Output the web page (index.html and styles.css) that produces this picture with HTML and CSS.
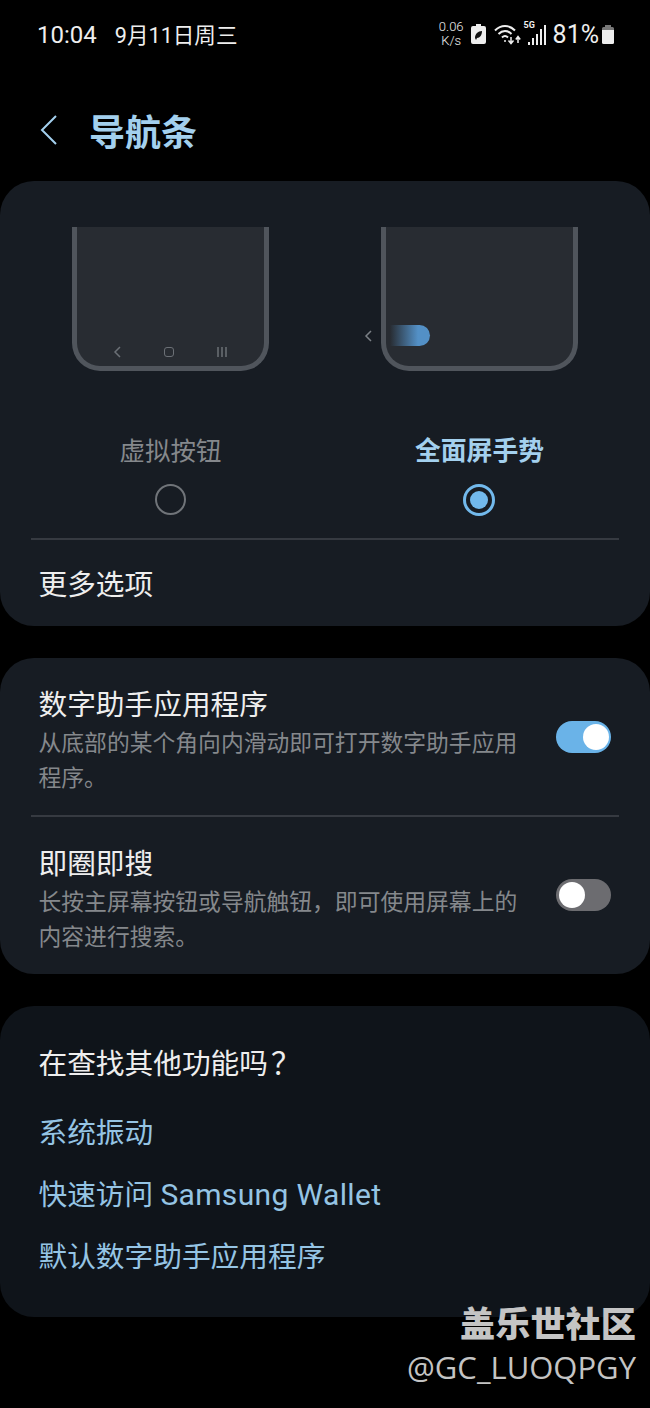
FILE: index.html
```html
<!DOCTYPE html>
<html lang="zh-CN">
<head>
    <meta charset="UTF-8">
    <meta name="viewport" content="width=device-width, initial-scale=1.0">
    <title>导航条</title>
    <link rel="stylesheet" href="styles.css">
</head>
<body>
    <div class="screen">
        <div class="status-bar">
            <div class="status-left">
                <span class="time">10:04</span>
                <span class="date">9月11日周三</span>
            </div>
            <div class="status-right">
                <div class="net-speed">0.06<br>K/s</div>
                <svg class="icon-saver" width="15" height="20" viewBox="0 0 15 20">
                    <path d="M5 0h5v2h3a2 2 0 0 1 2 2v14a2 2 0 0 1-2 2H2a2 2 0 0 1-2-2V4a2 2 0 0 1 2-2h3z" fill="#eee"/>
                    <path d="M4 14c0-4 3-7 7-7 0 4-2 7-5 7l-1 2z" fill="#111"/>
                </svg>
                <svg class="icon-wifi" width="28" height="22" viewBox="0 0 28 22" fill="none" stroke="#eee" stroke-width="2">
                    <path d="M1 7.500c6-6 14-6 20 0"/>
                    <path d="M4.500 11c4-4 9-4 13 0"/>
                    <path d="M8 14.500c2-2 4-2 6 0"/>
                    <path d="M17 14v6M14.500 17.500l2.500 3 2.500-3" stroke-width="1.500"/>
                    <path d="M24 20v-6M21.800 16.500l2.200-3 2.200 3" stroke-width="1.500"/>
                    <circle cx="11" cy="18" r="1" fill="#eee" stroke="none"/>
                </svg>
                <div class="signal">
                    <span class="signal-label">5G</span>
                    <svg width="18" height="24" viewBox="0 0 18 24" fill="#eee">
                        <rect x="0" y="20" width="2" height="3"/>
                        <rect x="4" y="16" width="2" height="7"/>
                        <rect x="8" y="12" width="2" height="11"/>
                        <rect x="12" y="7" width="2" height="16"/>
                        <rect x="16" y="3" width="2" height="20"/>
                    </svg>
                </div>
                <span class="battery-text">81%</span>
                <svg width="12" height="19" viewBox="0 0 12 19">
                    <path d="M3 0h6v2h1.500A1.500 1.500 0 0 1 12 3.500V5H0V3.500A1.500 1.500 0 0 1 1.500 2H3z" fill="#777"/>
                    <path d="M0 5h12v12.500a1.500 1.500 0 0 1-1.500 1.500h-9A1.500 1.500 0 0 1 0 17.500z" fill="#eee"/>
                </svg>
            </div>
        </div>

        <div class="page-header">
            <svg class="back-icon" width="18" height="30" viewBox="0 0 18 30" fill="none" stroke="#a3d0ee" stroke-width="2">
                <path d="M17 1 3 15l14 14"/>
            </svg>
            <h1>导航条</h1>
        </div>

        <div class="card card-nav">
            <div class="nav-options">
                <div class="nav-option">
                    <div class="phone">
                        <div class="phone-buttons">
                            <svg width="8" height="12" viewBox="0 0 8 12" fill="none" stroke="#6b7076" stroke-width="1.500"><path d="M7 1 2 6l5 5"/></svg>
                            <span class="home-btn"></span>
                            <svg width="10" height="10" viewBox="0 0 10 10" stroke="#6b7076" stroke-width="1.500"><path d="M1 0v10M5 0v10M9 0v10"/></svg>
                        </div>
                    </div>
                    <div class="nav-label">虚拟按钮</div>
                    <div class="radio"></div>
                </div>
                <div class="nav-option selected">
                    <div class="phone">
                        <svg class="swipe-arrow" width="8" height="12" viewBox="0 0 8 12" fill="none" stroke="#7b8086" stroke-width="1.500"><path d="M7 1 2 6l5 5"/></svg>
                        <div class="swipe-pill"></div>
                    </div>
                    <div class="nav-label">全面屏手势</div>
                    <div class="radio"><span></span></div>
                </div>
            </div>
            <div class="divider"></div>
            <div class="more-row">更多选项</div>
        </div>

        <div class="card card-settings">
            <div class="setting-row">
                <div class="setting-text">
                    <div class="setting-title">数字助手应用程序</div>
                    <div class="setting-desc">从底部的某个角向内滑动即可打开数字助手应用程序。</div>
                </div>
                <div class="toggle on"><span></span></div>
            </div>
            <div class="divider"></div>
            <div class="setting-row">
                <div class="setting-text">
                    <div class="setting-title">即圈即搜</div>
                    <div class="setting-desc">长按主屏幕按钮或导航触钮，即可使用屏幕上的内容进行搜索。</div>
                </div>
                <div class="toggle"><span></span></div>
            </div>
        </div>

        <div class="card card-links">
            <div class="links-title">在查找其他功能吗<span class="question">？</span></div>
            <a class="link">系统振动</a>
            <a class="link">快速访问 <span class="latin">Samsung Wallet</span></a>
            <a class="link">默认数字助手应用程序</a>
        </div>

        <div class="watermark">
            <div class="watermark-name">盖乐世社区</div>
            <div class="watermark-user">@GC_LUOQPGY</div>
        </div>
    </div>
</body>
</html>
```

FILE: styles.css
```css
* {
    box-sizing: border-box;
}

body {
    margin: 0;
    background: #000;
    font-family: Roboto, "Noto Sans CJK SC", sans-serif;
    color: #eee;
}

.screen {
    position: relative;
    width: 650px;
    height: 1408px;
    overflow: hidden;
    background: #000;
}

/* status bar */
.status-bar {
    display: flex;
    justify-content: space-between;
    align-items: center;
    height: 70px;
    padding: 0 36px 2px 37px;
}

.status-left {
    display: flex;
    align-items: baseline;
    gap: 18px;
    margin-bottom: 2px;
    color: #eee;
}

.time {
    font-size: 24px;
}

.date {
    font-size: 21.600px;
}

.status-right {
    display: flex;
    align-items: center;
    font-size: 25px;
}

.net-speed {
    font-size: 13px;
    font-weight: 300;
    line-height: 14px;
    text-align: center;
    margin-right: 7px;
}

.icon-saver {
    margin-right: 8px;
}

.icon-wifi {
    margin-right: 2px;
}

.signal {
    position: relative;
    width: 22px;
    height: 24px;
    margin-right: 7px;
    display: flex;
    justify-content: flex-end;
}

.signal-label {
    position: absolute;
    left: 0;
    top: -2px;
    font-size: 9px;
    font-weight: 700;
}

.battery-text {
    margin-right: 3px;
}

/* header */
.page-header {
    display: flex;
    align-items: center;
    height: 111px;
    padding-left: 39px;
    padding-top: 8px;
}

.back-icon {
    margin-right: 32px;
}

h1 {
    margin: 0;
    font-size: 36px;
    font-weight: 700;
    color: #a3d0ee;
}

/* cards */
.card {
    background: #171c23;
    border-radius: 34px;
    margin-bottom: 32px;
}

.divider {
    height: 2px;
    margin: 0 31px;
    background: #363a41;
}

.card-nav {
    height: 445px;
}

.nav-options {
    display: flex;
    height: 357px;
    padding: 46px 72px 0;
    justify-content: space-between;
}

.nav-option {
    width: 197px;
    display: flex;
    flex-direction: column;
    align-items: center;
}

.phone {
    position: relative;
    width: 197px;
    height: 144px;
    background: #282c32;
    border: 5px solid #50555c;
    border-top: none;
    border-radius: 0 0 28px 28px;
    display: flex;
    flex-direction: column;
    justify-content: flex-end;
}

.phone-buttons {
    display: flex;
    justify-content: space-between;
    align-items: center;
    padding: 0 37px 8px 36px;
}

.home-btn {
    width: 10px;
    height: 10px;
    border: 1.500px solid #6b7076;
    border-radius: 3px;
}

.swipe-arrow {
    position: absolute;
    left: -22px;
    top: 103px;
}

.swipe-pill {
    position: absolute;
    left: 4px;
    top: 98px;
    width: 40px;
    height: 21px;
    border-radius: 0 11px 11px 0;
    background: linear-gradient(90deg, rgba(76, 136, 190, 0), #5390c6 70%);
}

.nav-label {
    margin-top: 61px;
    font-size: 25.500px;
    line-height: 38px;
    color: #85888c;
}

.selected .nav-label {
    font-size: 25.800px;
    font-weight: 700;
    color: #a3d0ee;
}

.radio {
    width: 31px;
    height: 31px;
    margin-top: 14px;
    border: 2.500px solid #707479;
    border-radius: 50%;
    display: flex;
    align-items: center;
    justify-content: center;
}

.selected .radio {
    width: 32px;
    height: 32px;
    margin-right: 1px;
    border: 3px solid #72b9ec;
}

.radio span {
    width: 18px;
    height: 18px;
    border-radius: 50%;
    background: #72b9ec;
}

.more-row {
    padding: 25px 38.500px 0;
    font-size: 28.700px;
    line-height: 40px;
    color: #eee;
}

.card-settings {
    height: 316px;
}

.setting-row {
    display: flex;
    align-items: center;
    justify-content: space-between;
    height: 157px;
    padding: 0 39px 0 38.500px;
}

.setting-row:last-child {
    height: 156px;
}

.setting-text {
    width: 482px;
    margin-top: 8px;
}

.setting-title {
    font-size: 28.700px;
    line-height: 40px;
    color: #eee;
}

.setting-desc {
    font-size: 22.800px;
    line-height: 35px;
    color: #85888c;
    margin-top: 1px;
}

.toggle {
    width: 55px;
    height: 32px;
    border-radius: 16px;
    background: #6c6c70;
    padding: 3px;
    display: flex;
}

.toggle span {
    width: 26px;
    height: 26px;
    border-radius: 50%;
    background: #fff;
}

.toggle.on {
    background: #6ab3e8;
    justify-content: flex-end;
    padding-right: 2px;
}

.card-links {
    height: 311px;
    background: #0f141a;
    padding: 35px 38.500px 0;
}

.links-title {
    font-size: 28.700px;
    line-height: 40px;
    color: #eee;
    margin-bottom: 18px;
}

.question {
    font-family: "Noto Sans CJK TC", sans-serif;
    font-size: 30px;
    margin-left: 3px;
}

.link {
    display: block;
    font-size: 28.700px;
    line-height: 62px;
    color: #95c4e4;
}

.latin {
    font-size: 30px;
    letter-spacing: 0.350px;
}

/* watermark */
.watermark {
    position: absolute;
    right: 14px;
    top: 1301px;
    text-align: right;
    color: #c4c4c4;
}

.watermark-name {
    font-size: 35.200px;
    line-height: 48px;
    font-weight: 900;
}

.watermark-user {
    font-size: 31px;
    line-height: 37px;
    font-family: "Open Sans", sans-serif;
}
```
